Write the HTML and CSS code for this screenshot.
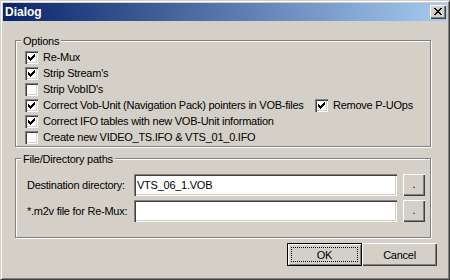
FILE: index.html
```html
<!DOCTYPE html>
<html lang="en">
<head>
    <meta charset="UTF-8">
    <title>Dialog</title>
    <link rel="stylesheet" href="styles.css">
</head>
<body>
    <svg class="sprites" width="0" height="0">
        <symbol id="tick" viewBox="0 0 13 13">
            <path d="M3 5h1v3H3z M4 6h1v3H4z M5 7h1v3H5z M6 6h1v3H6z M7 5h1v3H7z M8 4h1v3H8z M9 3h1v3H9z"/>
        </symbol>
    </svg>

    <div class="window">
        <div class="titlebar">
            <span class="title">Dialog</span>
            <div class="close">
                <svg width="8" height="7" viewBox="0 0 8 7" shape-rendering="crispEdges">
                    <path d="M0 0h2v1H0z M6 0h2v1H6z M1 1h2v1H1z M5 1h2v1H5z M2 2h4v1H2z M3 3h2v1H3z M2 4h4v1H2z M1 5h2v1H1z M5 5h2v1H5z M0 6h2v1H0z M6 6h2v1H6z"/>
                </svg>
            </div>
        </div>

        <div class="content">
            <section class="group options">
                <div class="group-title">Options</div>
                <div class="rows">
                    <div class="row">
                        <span class="box"><svg class="tick"><use href="#tick"/></svg></span>
                        <span>Re-Mux</span>
                    </div>
                    <div class="row">
                        <span class="box"><svg class="tick"><use href="#tick"/></svg></span>
                        <span>Strip Stream's</span>
                    </div>
                    <div class="row">
                        <span class="box"></span>
                        <span>Strip VobID's</span>
                    </div>
                    <div class="row">
                        <div class="item wide">
                            <span class="box"><svg class="tick"><use href="#tick"/></svg></span>
                            <span>Correct Vob-Unit (Navigation Pack) pointers in VOB-files</span>
                        </div>
                        <div class="item">
                            <span class="box"><svg class="tick"><use href="#tick"/></svg></span>
                            <span>Remove P-UOps</span>
                        </div>
                    </div>
                    <div class="row">
                        <span class="box"><svg class="tick"><use href="#tick"/></svg></span>
                        <span>Correct IFO tables with new VOB-Unit information</span>
                    </div>
                    <div class="row">
                        <span class="box"></span>
                        <span>Create new VIDEO_TS.IFO &amp; VTS_01_0.IFO</span>
                    </div>
                </div>
            </section>

            <section class="group paths">
                <div class="group-title">File/Directory paths</div>
                <div class="fields">
                    <div class="field">
                        <span class="field-label">Destination directory:</span>
                        <div class="input">VTS_06_1.VOB</div>
                        <div class="browse">.</div>
                    </div>
                    <div class="field">
                        <span class="field-label">*.m2v file for Re-Mux:</span>
                        <div class="input"></div>
                        <div class="browse">.</div>
                    </div>
                </div>
            </section>

            <div class="actions">
                <div class="btn default"><span class="focus">OK</span></div>
                <div class="btn">Cancel</div>
            </div>
        </div>
    </div>
</body>
</html>
```

FILE: styles.css
```css
html, body {
    margin: 0;
    padding: 0;
}

body {
    background: #d4d0c8;
    font: 11px "Liberation Sans", Arial, sans-serif;
    letter-spacing: -0.25px;
    color: #000;
}

.sprites {
    position: absolute;
    width: 0;
    height: 0;
}

.window {
    box-sizing: border-box;
    width: 450px;
    height: 280px;
    border: 1px solid;
    border-color: #d4d0c8 #404040 #404040 #d4d0c8;
    box-shadow: inset 1px 1px #fff, inset -1px -1px #808080;
    padding: 2px;
    display: flex;
    flex-direction: column;
}

/* title bar */
.titlebar {
    height: 18px;
    flex: none;
    display: flex;
    align-items: center;
    justify-content: space-between;
    padding: 0 1px 0 2px;
    background: linear-gradient(to right, #0a246a, #a6caf0);
}

.title {
    color: #fff;
    font-weight: bold;
    font-size: 12px;
    letter-spacing: 0;
}

.close {
    width: 16px;
    height: 14px;
    box-sizing: border-box;
    display: flex;
    align-items: center;
    justify-content: center;
    padding: 0 1px 1px 0;
    background: #d4d0c8;
    box-shadow: inset 1px 1px #fff, inset -1px -1px #404040, inset -2px -2px #808080;
}

.close svg {
    display: block;
}

/* body */
.content {
    flex: 1;
    padding: 19px 10px 0 12px;
}

.group {
    border: 1px solid #808080;
    box-shadow: inset 1px 1px #fff, 1px 1px #fff;
    margin-right: 6px;
    padding: 0 9px 1px;
}

.group-title {
    width: fit-content;
    margin: -7px 0 0 -4px;
    padding: 0 2px;
    line-height: 14px;
    background: #d4d0c8;
}

.rows {
    margin-top: 1px;
}

.row,
.item {
    display: flex;
    align-items: center;
    height: 16px;
    white-space: nowrap;
}

.item.wide {
    width: 290px;
    flex: none;
}

.box {
    width: 13px;
    height: 13px;
    flex: none;
    margin-right: 5px;
    background: #fff;
    box-shadow: inset 1px 1px #808080, inset 2px 2px #404040, inset -1px -1px #fff, inset -2px -2px #d4d0c8;
}

.tick {
    display: block;
    width: 13px;
    height: 13px;
    shape-rendering: crispEdges;
}

.paths {
    margin-top: 11px;
    padding: 0 5px 15px 9px;
}

.fields {
    margin-top: 8px;
    display: flex;
    flex-direction: column;
    gap: 4px;
}

.field {
    display: flex;
    align-items: center;
    height: 22px;
}

.field-label {
    width: 107px;
    padding-left: 2px;
    flex: none;
    white-space: nowrap;
}

.input {
    flex: 1;
    height: 22px;
    box-sizing: border-box;
    padding: 0 3px;
    line-height: 22px;
    background: #fff;
    box-shadow: inset 1px 1px #808080, inset 2px 2px #404040, inset -1px -1px #fff, inset -2px -2px #d4d0c8;
}

.browse {
    width: 22px;
    height: 22px;
    margin-left: 6px;
    flex: none;
    box-sizing: border-box;
    text-align: center;
    line-height: 20px;
    box-shadow: inset 1px 1px #fff, inset -1px -1px #404040, inset -2px -2px #808080;
}

/* buttons */
.actions {
    display: flex;
    justify-content: flex-end;
    margin-top: 5px;
}

.btn {
    width: 75px;
    height: 23px;
    box-sizing: border-box;
    display: flex;
    align-items: center;
    justify-content: center;
    box-shadow: inset 1px 1px #fff, inset -1px -1px #404040, inset -2px -2px #808080;
}

.btn.default {
    border: 1px solid #000;
    box-shadow: inset 1px 1px #fff, inset -1px -1px #808080;
    padding: 3px;
}

.focus {
    flex: 1;
    align-self: stretch;
    display: flex;
    align-items: center;
    justify-content: center;
    border: 1px dotted #000;
}
```
